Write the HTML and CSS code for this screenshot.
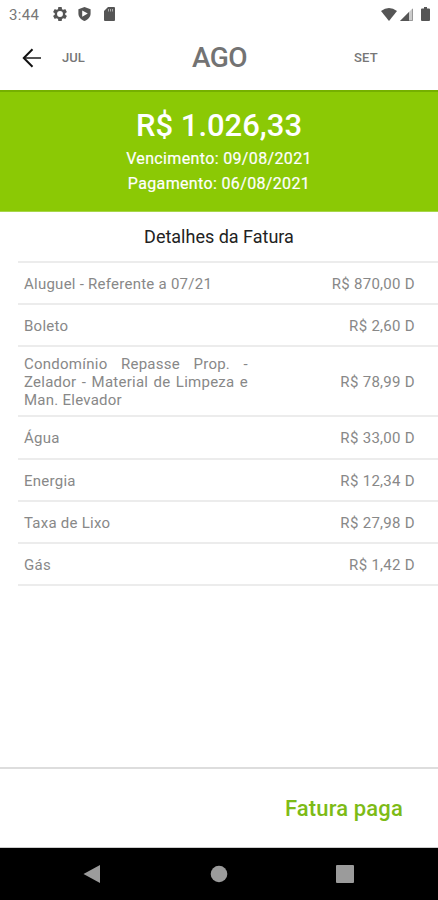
FILE: index.html
```html
<!DOCTYPE html>
<html lang="pt-BR">
<head>
<meta charset="utf-8">
<title>Fatura</title>
<link rel="stylesheet" href="styles.css">
</head>
<body>
<div class="screen">
  <div class="status">
    <span class="clock">3:44</span>
    <svg class="gear" width="14" height="14" viewBox="2 2 20 20"><path fill="#555" fill-rule="evenodd" d="M19.43 12.98c.04-.32.07-.64.07-.98s-.03-.66-.07-.98l2.11-1.65c.19-.15.24-.42.12-.64l-2-3.46c-.12-.22-.39-.3-.61-.22l-2.49 1c-.52-.4-1.08-.73-1.69-.98l-.38-2.65A.488.488 0 0 0 14 2h-4c-.25 0-.46.18-.49.42l-.38 2.65c-.61.25-1.17.59-1.69.98l-2.49-1c-.23-.09-.49 0-.61.22l-2 3.46c-.13.22-.07.49.12.64l2.11 1.65c-.04.32-.07.65-.07.98s.03.66.07.98l-2.11 1.65c-.19.15-.24.42-.12.64l2 3.46c.12.22.39.3.61.22l2.49-1c.52.4 1.08.73 1.69.98l.38 2.65c.03.24.24.42.49.42h4c.25 0 .46-.18.49-.42l.38-2.65c.61-.25 1.17-.59 1.69-.98l2.49 1c.23.09.49 0 .61-.22l2-3.46c.12-.22.07-.49-.12-.64l-2.11-1.65zM12 16.2a4.2 4.2 0 1 1 0-8.4 4.2 4.2 0 0 1 0 8.4z"/></svg>
    <svg class="shield" width="13" height="14" viewBox="0 0 13 14"><path fill="#555" fill-rule="evenodd" d="M6.5 0 12.6 2.2V6.600C12.600 10 10 13 6.500 14 3 13 .4 10 .4 6.600V2.200ZM4.200 3.500V9.800L9.800 6.600Z"/></svg>
    <svg class="card" width="11" height="14" viewBox="0 0 11 14"><path fill="#555" d="M4 0H10Q11 0 11 1V13Q11 14 10 14H1Q0 14 0 13V4Z"/><path stroke="#aaa" d="M4.500 2V4.500M6.500 2V4.500M8.500 2V4.500"/></svg>
    <span class="grow"></span>
    <svg class="wifi" width="16" height="13" viewBox="0 0 16 13"><path fill="#555" d="M0 3Q8-3 16 3L8 13Z"/></svg>
    <svg class="signal" width="13" height="13" viewBox="0 0 13 13"><path fill="#ccc" d="M13 0V13H0Z"/><path fill="#555" d="M9 4V13H0Z"/><path stroke="#999" fill="none" d="M9 12.500H12.500V1"/></svg>
    <svg class="battery" width="9" height="14" viewBox="0 0 9 14"><path fill="#555" d="M3 0H6V1.500H8Q9 1.500 9 2.500V13Q9 14 8 14H1Q0 14 0 13V2.500Q0 1.500 1 1.500H3Z"/></svg>
  </div>
  <header class="months">
    <svg class="back" width="20" height="20" viewBox="0 0 20 20" fill="none" stroke-width="2"><path stroke="#555" d="M2 10H19"/><path stroke="#111" d="M10.500 1.300 1.800 10 10.500 18.700"/></svg>
    <span class="month prev">JUL</span>
    <span class="current">AGO</span>
    <span class="month next">SET</span>
  </header>
  <section class="summary">
    <div class="total">R$ 1.026,33</div>
    <div class="date due">Vencimento: 09/08/2021</div>
    <div class="date paid">Pagamento: 06/08/2021</div>
  </section>
  <h1 class="title">Detalhes da Fatura</h1>
  <ul class="items">
    <li><span class="name">Aluguel - Referente a 07/21</span><span class="price">R$ 870,00 D</span></li>
    <li><span class="name">Boleto</span><span class="price">R$ 2,60 D</span></li>
    <li class="tall"><span class="name">Condomínio Repasse Prop. - Zelador - Material de Limpeza e Man. Elevador</span><span class="price">R$ 78,99 D</span></li>
    <li><span class="name">Água</span><span class="price">R$ 33,00 D</span></li>
    <li><span class="name">Energia</span><span class="price">R$ 12,34 D</span></li>
    <li><span class="name">Taxa de Lixo</span><span class="price">R$ 27,98 D</span></li>
    <li><span class="name">Gás</span><span class="price">R$ 1,42 D</span></li>
  </ul>
  <footer class="paid-bar">Fatura paga</footer>
  <nav class="system">
    <svg width="18" height="18" viewBox="0 0 18 18"><path fill="#9b9b9b" d="M17 0V18L.5 9Z"/></svg>
    <svg width="18" height="18" viewBox="0 0 18 18"><circle fill="#9b9b9b" cx="9" cy="9" r="8.300"/></svg>
    <svg width="18" height="18" viewBox="0 0 18 18"><rect fill="#9b9b9b" width="18" height="18" rx="1"/></svg>
  </nav>
</div>
</body>
</html>
```
FILE: styles.css
```css
* { box-sizing: border-box; }
body { margin: 0; font-family: Roboto, sans-serif; background: #fff; }
.screen { width: 438px; height: 900px; display: flex; flex-direction: column; overflow: hidden; }
svg { display: block; flex: none; }
.status { height: 28px; display: flex; align-items: center; padding: 0 8px 0 9px; flex: none; }
.clock { width: 44px; padding-top: 1px; font-size: 15px; letter-spacing: 0.3px; color: #777; }
.shield { margin-left: 11px; }
.card { margin-left: 13px; }
.grow { flex: 1; }
.wifi { margin-right: 3px; }
.signal { margin-right: 8px; }
.months { height: 62px; flex: none; display: grid; grid-template-columns: 62px 80px 155px 141px; align-items: center; padding-bottom: 3px; }
.back { margin-left: 22px; }
.month { font-size: 13px; font-weight: 500; color: #777; }
.current { font-size: 28px; font-weight: 500; color: #737373; text-align: center; letter-spacing: -0.5px; }
.next { padding-left: 57px; letter-spacing: 0.2px; }
.summary { height: 122px; flex: none; background: #8bc905; border-top: 2px solid #75b000; border-bottom: 1px solid #a6d64a; color: #fff; text-align: center; padding-top: 13px; }
.total { font-size: 31px; line-height: 41px; font-weight: 500; }
.date { font-size: 16px; line-height: 25px; letter-spacing: 0.35px; -webkit-text-stroke: 0.2px #fff; }
.title { margin: 0; height: 49px; flex: none; font-size: 18px; font-weight: 400; line-height: 50px; text-align: center; color: #222; }
.items { list-style: none; margin: 0 0 0 18px; padding: 0; border-top: 2px solid #ececec; }
.items li { height: 42.2px; border-bottom: 2px solid #ececec; display: flex; align-items: center; justify-content: space-between; padding: 2px 23px 0 6px; font-size: 15px; line-height: 18px; color: #888; }
.items .tall { height: 70px; }
.name { width: 224px; text-align: justify; letter-spacing: 0.25px; }
.price { letter-spacing: 0.3px; }
.paid-bar { margin-top: auto; height: 81px; flex: none; border-top: 2px solid #ddd; border-bottom: 1px solid #ccc; display: flex; align-items: center; justify-content: flex-end; padding: 0 35px 0 0; color: #7dbb16; font-size: 22px; font-weight: 500; letter-spacing: 0.15px; }
.system { height: 52px; flex: none; background: #000; display: flex; align-items: center; justify-content: space-between; padding: 0 84px 0 83px; }
```
